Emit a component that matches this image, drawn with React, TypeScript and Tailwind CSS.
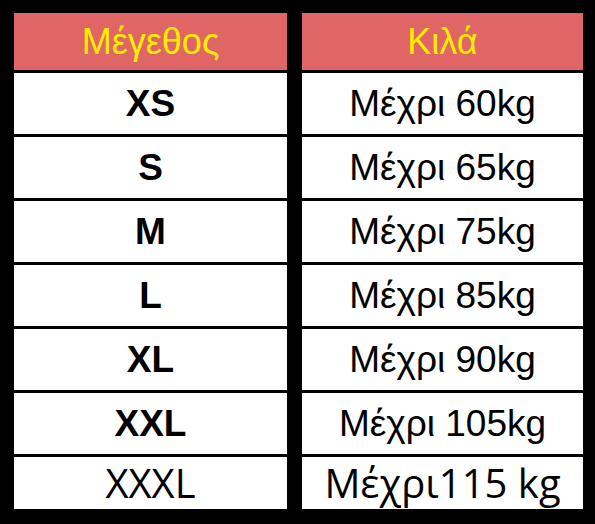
import React from 'react';

const rows: { size: string; kilos: string; last?: boolean }[] = [
  { size: 'XS', kilos: 'Μέχρι 60kg' },
  { size: 'S', kilos: 'Μέχρι 65kg' },
  { size: 'M', kilos: 'Μέχρι 75kg' },
  { size: 'L', kilos: 'Μέχρι 85kg' },
  { size: 'XL', kilos: 'Μέχρι 90kg' },
  { size: 'XXL', kilos: 'Μέχρι 105kg' },
  { size: 'XXXL', kilos: 'Μέχρι115 kg', last: true },
];

const App: React.FC = () => {
  return (
    <div className="w-[595px] h-[524px] bg-black pl-[14px] pt-[13px] font-['Liberation_Sans',Arial,sans-serif]">
      <div className="grid grid-cols-[273px_281px] gap-x-[15px] gap-y-[3px]">
        <div className="h-[57px] bg-[#e06666] text-[#ffec00] text-[36px] flex items-center justify-center">
          Μέγεθος
        </div>
        <div className="h-[57px] bg-[#e06666] text-[#ffec00] text-[36px] flex items-center justify-center">
          Κιλά
        </div>
        {rows.map((row) => (
          <React.Fragment key={row.size}>
            <div
              className={`bg-white text-black flex items-center justify-center ${
                row.last
                  ? "h-[52px] text-[40px] font-['Open_Sans',sans-serif] font-normal"
                  : 'h-[61px] text-[37px] font-bold'
              }`}
            >
              {row.size}
            </div>
            <div
              className={`bg-white text-black flex items-center justify-center ${
                row.last
                  ? "h-[52px] text-[40px] font-['Open_Sans',sans-serif]"
                  : 'h-[61px] text-[37px]'
              }`}
            >
              {row.kilos}
            </div>
          </React.Fragment>
        ))}
      </div>
    </div>
  );
};

export default App;
